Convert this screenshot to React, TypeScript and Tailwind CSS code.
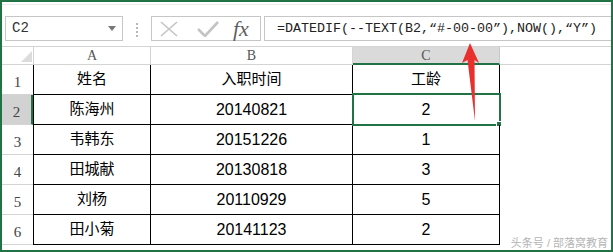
import React from "react";

type Row = { no: number; name: string; date: string; years: string };

const rows: Row[] = [
  { no: 2, name: "陈海州", date: "20140821", years: "2" },
  { no: 3, name: "韦韩东", date: "20151226", years: "1" },
  { no: 4, name: "田城献", date: "20130818", years: "3" },
  { no: 5, name: "刘杨", date: "20110929", years: "5" },
  { no: 6, name: "田小菊", date: "20141123", years: "2" },
];

const cjk = "font-['Liberation_Sans','Noto_Sans_CJK_SC',sans-serif]";

const RowNo = ({ n, active }: { n: number; active?: boolean }) => (
  <div
    className={
      "w-[31px] h-full flex items-end justify-center pb-[4px] border-b border-[#d4d4d4] text-[15px] leading-none text-[#444] font-['Liberation_Serif',serif] " +
      (active ? "bg-[#d2d2d2] border-r-2 border-r-[#217346]" : "")
    }
  >
    {n}
  </div>
);

const App = () => {
  return (
    <div className="w-[613px] h-[252px] border-2 border-[#217346] bg-white relative overflow-hidden">
      {/* Formula bar */}
      <div className="h-[45px] flex items-start pt-[11px] border-t border-[#ececec] mt-[2px] -mb-[3px]">
        <div className="ml-[3px] w-[118px] h-[25px] border border-[#c6c6c6] flex items-center justify-between pl-[6px] pr-[6px]">
          <span className="font-['Liberation_Mono',monospace] text-[14px] text-[#333]">C2</span>
          <svg width="8" height="5" viewBox="0 0 8 5">
            <polygon points="0,0 8,0 4,5" fill="#777" />
          </svg>
        </div>
        <div className="ml-[13px] mt-[7px] flex flex-col gap-[2px]">
          <span className="w-[2px] h-[2px] bg-[#b8b8b8]" />
          <span className="w-[2px] h-[2px] bg-[#b8b8b8]" />
          <span className="w-[2px] h-[2px] bg-[#b8b8b8]" />
          <span className="w-[2px] h-[2px] bg-[#b8b8b8]" />
        </div>
        <div className="ml-[13px] w-[110px] h-[25px] border border-[#c6c6c6] flex items-center pl-[8px]">
          <svg width="18" height="16" viewBox="0 0 18 16">
            <path d="M1 1 L17 15 M17 1 L1 15" stroke="#c4c4c4" strokeWidth="1.6" fill="none" />
          </svg>
          <svg width="22" height="16" viewBox="0 0 22 16" className="ml-[19px]">
            <path d="M1 8 L8 15 L21 1" stroke="#c4c4c4" strokeWidth="2.6" fill="none" />
          </svg>
          <span className="ml-[14px] font-['Liberation_Serif',serif] italic text-[22px] leading-none text-[#5f5f5f]">
            fx
          </span>
        </div>
        <div className="ml-[3px] flex-1 -mr-[4px] h-[25px] border border-[#c6c6c6] flex items-center pl-[12px]">
          <span className="font-['Liberation_Mono',monospace] text-[13.33px] text-[#222] whitespace-nowrap">
            =DATEDIF(--TEXT(B2,“#-00-00”),NOW(),“Y”)
          </span>
        </div>
      </div>

      {/* Column headers */}
      <div className="h-[19px] flex border-t border-[#d4d4d4] font-['Liberation_Serif',serif] text-[14px] leading-none text-[#555]">
        <div className="w-[32px] h-full border-r border-b border-[#d4d4d4] flex items-end justify-end pr-[1px] pb-[2px]">
          <svg width="11" height="11" viewBox="0 0 11 11">
            <polygon points="11,0 11,11 0,11" fill="#dcdcdc" />
          </svg>
        </div>
        <div className="w-[117px] h-full border-r border-b border-[#d4d4d4] flex items-end justify-center pb-[1px]">A</div>
        <div className="w-[202px] h-full border-r border-b border-[#d4d4d4] flex items-end justify-center pb-[1px]">B</div>
        <div className="w-[147px] h-full bg-[#dadada] border-r border-[#c8c8c8] border-b-2 border-b-[#217346] flex items-end justify-center">C</div>
        <div className="flex-1 h-full border-b border-[#d4d4d4]" />
      </div>

      {/* Row 1: headings */}
      <div className="h-[30px] flex">
        <RowNo n={1} />
        <div className={`w-[118px] h-full border-l border-r border-b border-black flex items-center justify-center text-[15px] ${cjk}`}>姓名</div>
        <div className={`w-[202px] h-full border-r border-b border-black flex items-center justify-center text-[15px] ${cjk}`}>入职时间</div>
        <div className={`w-[147px] h-full border-r border-b border-black flex items-center justify-center text-[15px] ${cjk}`}>工龄</div>
        <div className="flex-1" />
      </div>

      {rows.map((r) => (
        <div key={r.no} className="h-[30px] flex">
          <RowNo n={r.no} active={r.no === 2} />
          <div className={`w-[118px] h-full border-l border-r border-b border-black flex items-center justify-center text-[15px] ${cjk}`}>
            {r.name}
          </div>
          <div className={`w-[202px] h-full border-r border-b border-black flex items-center justify-center text-[16px] ${cjk}`}>
            {r.date}
          </div>
          <div className={`relative w-[147px] h-full border-r border-b border-black flex items-center justify-center text-[16px] ${cjk}`}>
            {r.years}
            {r.no === 2 && (
              <>
                <div className="absolute -left-[1px] -top-[2px] -right-[2px] -bottom-[2px] border-2 border-[#217346]" />
                <div className="absolute -right-[3px] -bottom-[3px] w-[6px] h-[6px] bg-[#217346] border border-white" />
              </>
            )}
          </div>
          <div className="flex-1" />
        </div>
      ))}

      {/* Red arrow annotation */}
      <svg className="absolute left-0 top-0 pointer-events-none" width="613" height="252" viewBox="0 0 613 252">
        <polygon points="468,41 477,61 472.5,58 473,119 465.5,58 460,61" fill="#e8302e" />
      </svg>

      {/* Watermark */}
      <div className={`absolute right-[3px] bottom-[1px] text-[11px] leading-none text-[#b4b4b4] ${cjk}`}>
        头条号 / 部落窝教育
      </div>
    </div>
  );
};

export default App;
